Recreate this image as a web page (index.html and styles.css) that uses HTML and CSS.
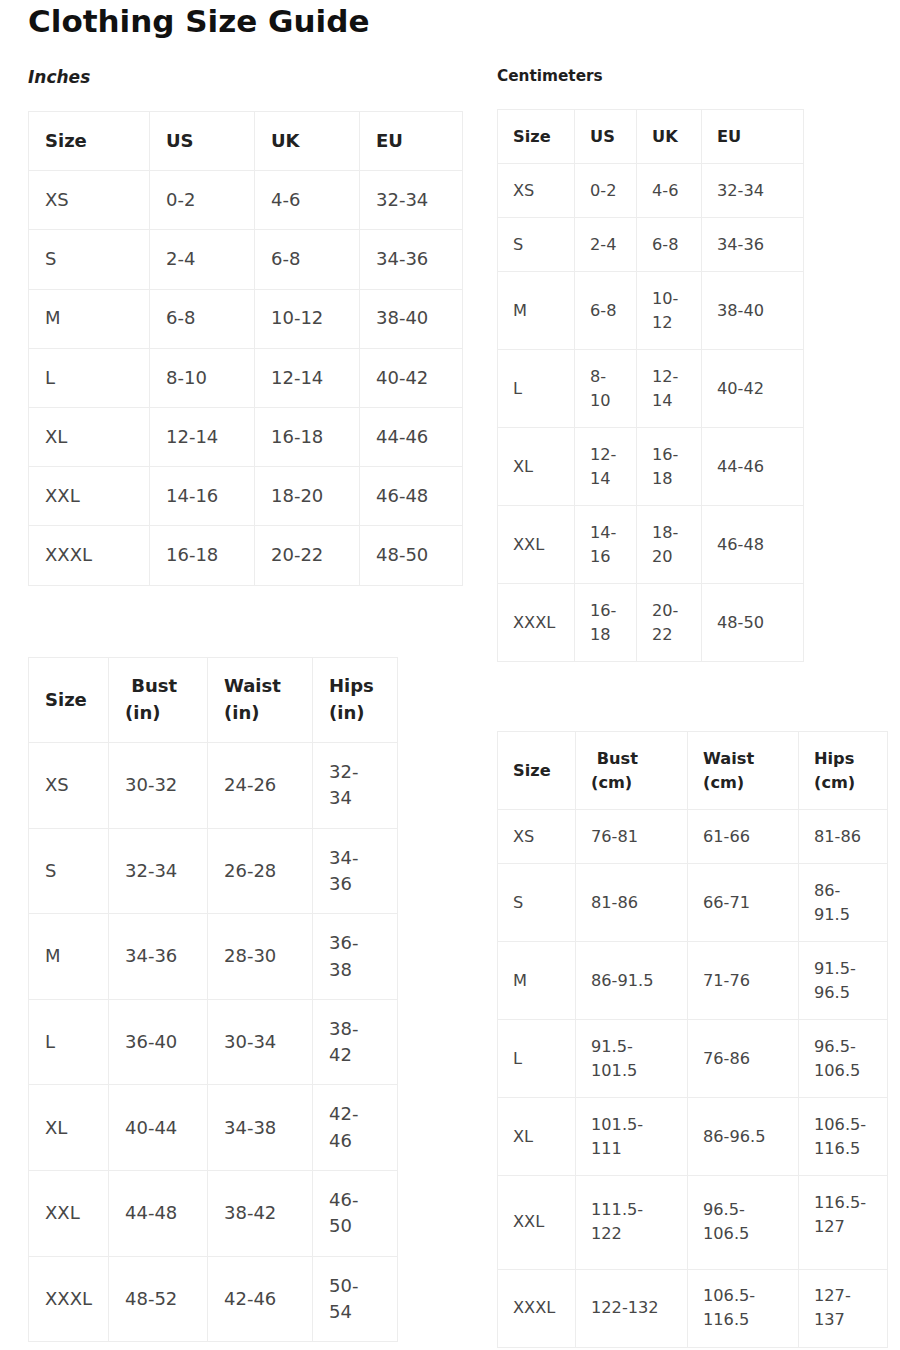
FILE: index.html
```html
<!DOCTYPE html>
<html lang="en">
<head>
<meta charset="utf-8">
<title>Clothing Size Guide</title>
<link rel="stylesheet" href="styles.css">
</head>
<body>
<div class="page">
  <h1 class="title">Clothing Size Guide</h1>
  <div class="cols">
    <section class="col">
      <h2 class="label label-in">Inches</h2>
      <table class="size t-in t1">
        <colgroup><col class="w121"><col class="w105"><col class="w105"><col class="w103"></colgroup>
        <tr><th>Size</th><th>US</th><th>UK</th><th>EU</th></tr>
        <tr><td>XS</td><td>0-<wbr>2</td><td>4-<wbr>6</td><td>32-<wbr>34</td></tr>
        <tr><td>S</td><td>2-<wbr>4</td><td>6-<wbr>8</td><td>34-<wbr>36</td></tr>
        <tr><td>M</td><td>6-<wbr>8</td><td>10-<wbr>12</td><td>38-<wbr>40</td></tr>
        <tr><td>L</td><td>8-<wbr>10</td><td>12-<wbr>14</td><td>40-<wbr>42</td></tr>
        <tr><td>XL</td><td>12-<wbr>14</td><td>16-<wbr>18</td><td>44-<wbr>46</td></tr>
        <tr><td>XXL</td><td>14-<wbr>16</td><td>18-<wbr>20</td><td>46-<wbr>48</td></tr>
        <tr><td>XXXL</td><td>16-<wbr>18</td><td>20-<wbr>22</td><td>48-<wbr>50</td></tr>
      </table>
      <table class="size t-in t3">
        <colgroup><col class="w80"><col class="w99"><col class="w105"><col class="w85"></colgroup>
        <tr><th>Size</th><th>&nbsp;Bust (in)</th><th>Waist (in)</th><th>Hips (in)</th></tr>
        <tr><td>XS</td><td>30-<wbr>32</td><td>24-<wbr>26</td><td>32-<wbr>34</td></tr>
        <tr><td>S</td><td>32-<wbr>34</td><td>26-<wbr>28</td><td>34-<wbr>36</td></tr>
        <tr><td>M</td><td>34-<wbr>36</td><td>28-<wbr>30</td><td>36-<wbr>38</td></tr>
        <tr><td>L</td><td>36-<wbr>40</td><td>30-<wbr>34</td><td>38-<wbr>42</td></tr>
        <tr><td>XL</td><td>40-<wbr>44</td><td>34-<wbr>38</td><td>42-<wbr>46</td></tr>
        <tr><td>XXL</td><td>44-<wbr>48</td><td>38-<wbr>42</td><td>46-<wbr>50</td></tr>
        <tr><td>XXXL</td><td>48-<wbr>52</td><td>42-<wbr>46</td><td>50-<wbr>54</td></tr>
      </table>
    </section>
    <section class="col">
      <h2 class="label label-cm">Centimeters</h2>
      <table class="size t-cm t2">
        <colgroup><col class="w77"><col class="w62"><col class="w65"><col class="w102"></colgroup>
        <tr><th>Size</th><th>US</th><th>UK</th><th>EU</th></tr>
        <tr><td>XS</td><td>0-<wbr>2</td><td>4-<wbr>6</td><td>32-<wbr>34</td></tr>
        <tr><td>S</td><td>2-<wbr>4</td><td>6-<wbr>8</td><td>34-<wbr>36</td></tr>
        <tr><td>M</td><td>6-<wbr>8</td><td>10-<wbr>12</td><td>38-<wbr>40</td></tr>
        <tr><td>L</td><td>8-<wbr>10</td><td>12-<wbr>14</td><td>40-<wbr>42</td></tr>
        <tr><td>XL</td><td>12-<wbr>14</td><td>16-<wbr>18</td><td>44-<wbr>46</td></tr>
        <tr><td>XXL</td><td>14-<wbr>16</td><td>18-<wbr>20</td><td>46-<wbr>48</td></tr>
        <tr><td>XXXL</td><td>16-<wbr>18</td><td>20-<wbr>22</td><td>48-<wbr>50</td></tr>
      </table>
      <table class="size t-cm t4">
        <colgroup><col class="w78"><col class="w112"><col class="w111"><col class="w89"></colgroup>
        <tr><th>Size</th><th>&nbsp;Bust (cm)</th><th>Waist (cm)</th><th>Hips (cm)</th></tr>
        <tr><td>XS</td><td>76-<wbr>81</td><td>61-<wbr>66</td><td>81-<wbr>86</td></tr>
        <tr><td>S</td><td>81-<wbr>86</td><td>66-<wbr>71</td><td>86-<wbr>91.5</td></tr>
        <tr><td>M</td><td>86-<wbr>91.5</td><td>71-<wbr>76</td><td>91.5-<wbr>96.5</td></tr>
        <tr><td>L</td><td>91.5-<wbr>101.5</td><td>76-<wbr>86</td><td>96.5-<wbr>106.5</td></tr>
        <tr><td>XL</td><td>101.5-<wbr>111</td><td>86-<wbr>96.5</td><td>106.5-<wbr>116.5</td></tr>
        <tr><td>XXL</td><td>111.5-<wbr>122</td><td>96.5-<wbr>106.5</td><td class="raised">116.5-<wbr>127</td></tr>
        <tr><td>XXXL</td><td>122-<wbr>132</td><td>106.5-<wbr>116.5</td><td>127-<wbr>137</td></tr>
      </table>
    </section>
  </div>
</div>
</body>
</html>
```

FILE: styles.css
```css
html, body {
  margin: 0;
  background: #ffffff;
}

body {
  font-family: "DejaVu Sans", "Liberation Sans", sans-serif;
  color: #474747;
}

.page {
  padding: 3px 0 0 28px;
}

.title {
  margin: 0;
  font-size: 31px;
  line-height: 36px;
  font-weight: bold;
  color: #111111;
}

.cols {
  display: grid;
  grid-template-columns: 469px 1fr;
  align-items: start;
}

.label {
  margin: 28px 0 24px;
  font-weight: bold;
  color: #1e1e1e;
}

.label-in {
  font-size: 17px;
  line-height: 20px;
  font-style: italic;
}

.label-cm {
  font-size: 15.3px;
  line-height: 18px;
}

table.size {
  border-collapse: collapse;
  table-layout: fixed;
}

.size th,
.size td {
  border: 1px solid #ededed;
  text-align: left;
  vertical-align: middle;
}

.size th {
  font-weight: bold;
  color: #222222;
}

.t-in {
  font-size: 18px;
  line-height: 26.4px;
}

.t-in th,
.t-in td {
  padding: 15.9px 16px;
}

.t-cm {
  font-size: 16.2px;
  line-height: 24px;
}

.t-cm th,
.t-cm td {
  padding: 14.5px 15px;
}

.t1 { width: 434px; }
.t2 { width: 306px; }
.t3 { width: 369px; margin-top: 71px; }
.t4 { width: 390px; margin-top: 69px; }

.t3 td:nth-child(4),
.t3 th:nth-child(4) {
  padding-right: 20px;
}

.t4 td:nth-child(2),
.t4 td:nth-child(3) {
  padding-right: 25px;
}

.t4 td:nth-child(4) {
  padding-right: 22px;
}

.t4 td.raised {
  padding-bottom: 30px;
}

.w62 { width: 62px; }
.w65 { width: 65px; }
.w77 { width: 77px; }
.w78 { width: 78px; }
.w80 { width: 80px; }
.w85 { width: 85px; }
.w89 { width: 89px; }
.w99 { width: 99px; }
.w102 { width: 102px; }
.w103 { width: 103px; }
.w105 { width: 105px; }
.w111 { width: 111px; }
.w112 { width: 112px; }
.w121 { width: 121px; }
```
